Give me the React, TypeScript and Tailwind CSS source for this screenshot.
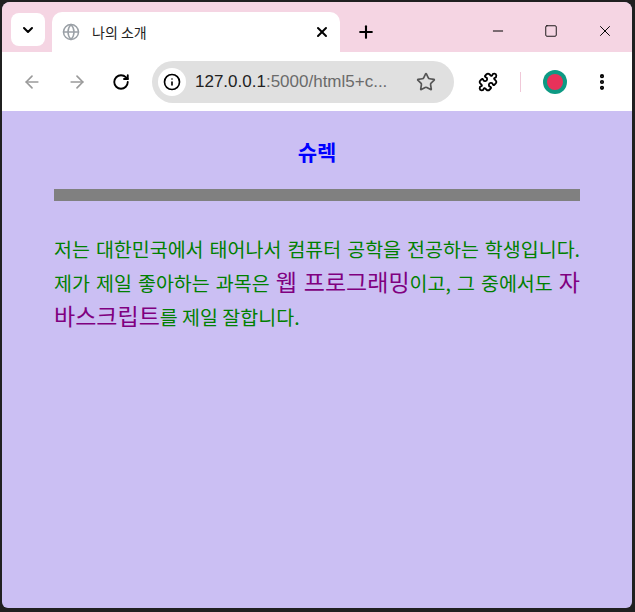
import { ChevronDown, X, Plus, Minus, Square, ArrowLeft, ArrowRight, RotateCw, Info, Star, Puzzle, EllipsisVertical, Globe } from 'lucide-react';

export default function App() {
  return (
    <div className="h-[612px] w-[635px] bg-[#202020] pl-[2px] pr-[3px] pt-[2px] pb-[4px]" style={{ fontFamily: '"Noto Sans CJK KR", "Liberation Sans", sans-serif' }}>
      <div className="flex h-full flex-col overflow-hidden rounded-t-[8px] rounded-b-[6px] bg-[#cbbff3]">
        <div className="flex h-[50px] items-end bg-[#f5d5e3]">
          <div className="mb-[6px] ml-[9px] flex h-[33px] w-[34px] items-center justify-center rounded-[8px] bg-white">
            <ChevronDown className="h-4 w-4" strokeWidth={3} />
          </div>
          <div className="ml-[7px] flex h-[40px] w-[288px] items-center rounded-t-[10px] bg-white px-[10px]">
            <Globe className="h-[18px] w-[18px] text-[#9aa0a6]" />
            <span className="ml-[12px] text-[14px] text-[#222]">나의 소개</span>
            <X className="ml-auto h-4 w-4" strokeWidth={3} />
          </div>
          <div className="mb-[10px] ml-[16px]"><Plus className="h-5 w-5" strokeWidth={2.5} /></div>
          <div className="mb-[12px] ml-auto flex items-center gap-[38px] pr-[18px]">
            <Minus className="h-4 w-4" strokeWidth={1.5} />
            <Square className="h-[14px] w-[14px]" strokeWidth={1.5} />
            <X className="h-[18px] w-[18px]" strokeWidth={1.3} />
          </div>
        </div>
        <div className="flex h-[59px] items-center bg-white pl-[20px] pr-[20px]">
          <ArrowLeft className="h-5 w-5 text-[#9a9a9a]" />
          <ArrowRight className="ml-[25px] h-5 w-5 text-[#9a9a9a]" />
          <RotateCw className="ml-[25px] h-[18px] w-[18px]" strokeWidth={2.5} />
          <div className="ml-[22px] flex h-[42px] w-[302px] items-center rounded-full bg-[#e0e0e0] px-[6px]">
            <div className="flex h-[28px] w-[28px] items-center justify-center rounded-full bg-white"><Info className="h-[18px] w-[18px]" strokeWidth={2.2} /></div>
            <span className="ml-[9px] text-[17px] text-[#222]" style={{ fontFamily: '"Liberation Sans", sans-serif' }}>127.0.0.1<span className="text-[#6b6b6b]">:5000/html5+c...</span></span>
            <Star className="ml-auto mr-[12px] h-5 w-5 text-[#555]" />
          </div>
          <Puzzle className="ml-[24px] h-5 w-5" strokeWidth={2.2} />
          <div className="ml-[22px] h-[20px] w-[1px] bg-[#f0c8d8]" />
          <div className="ml-[22px] flex h-[24px] w-[24px] items-center justify-center rounded-full bg-[#0d9a84]">
            <div className="h-[16px] w-[16px] rounded-full bg-[#e8325a]" />
          </div>
          <EllipsisVertical className="ml-auto h-5 w-5" strokeWidth={3} />
        </div>
        <div className="flex-1 px-[52px] pt-[22px]">
          <h1 className="text-center text-[21px] font-bold leading-[36px] text-[#0000ff]">슈렉</h1>
          <div className="mt-[20px] h-[12px] bg-[#808080]" />
          <p className="mt-[32px] break-all text-justify text-[19.5px] leading-[32px] text-[#008000]">
            저는 대한민국에서 태어나서 컴퓨터 공학을 전공하는 학생입니다. 제가 제일 좋아하는 과목은 <span className="text-[23px] text-[#800080]">웹 프로그래밍</span>이고, 그 중에서도 <span className="text-[23px] text-[#800080]">자바스크립트</span>를 제일 잘합니다.
          </p>
        </div>
      </div>
    </div>
  );
}
